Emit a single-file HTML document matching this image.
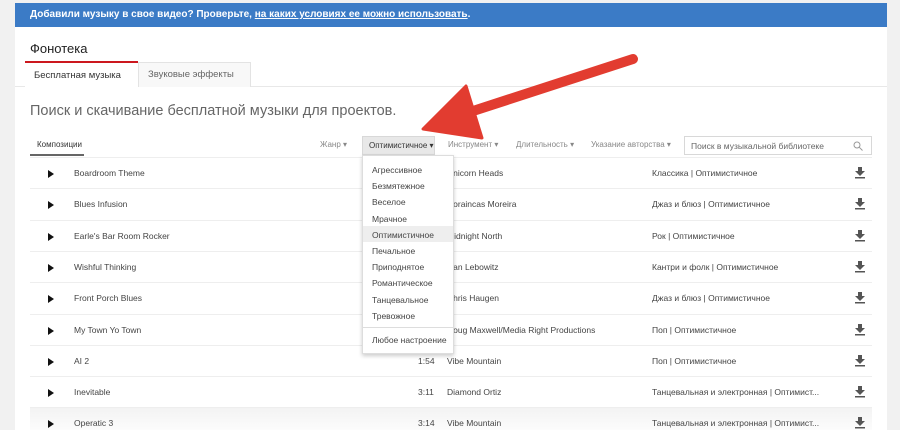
<!DOCTYPE html>
<html><head><meta charset="utf-8"><style>
*{box-sizing:border-box;margin:0;padding:0}
html,body{width:900px;height:430px;overflow:hidden}
body{background:#f1f1f1;font-family:"Liberation Sans","Noto Sans CJK SC",sans-serif;position:relative}
.panel{position:absolute;left:15px;top:3px;width:872px;height:427px;background:#fff}
.banner{position:absolute;left:15px;top:3px;width:872px;height:24px;background:#3b7bc6;color:#fff;font-size:10px;font-weight:bold;line-height:24px;padding-left:15px}
.abs{position:absolute;white-space:nowrap}
.title{left:30px;top:41px;font-size:13px;color:#222}
.tab1{left:25px;top:61px;width:113px;height:26px;border-top:2px solid #cc181e;background:#fff;font-size:9.5px;color:#333;padding:7px 0 0 9px}
.tab2{left:138px;top:62px;width:113px;height:25px;border:1px solid #e3e3e3;border-bottom:none;background:#f8f8f8;font-size:9.5px;color:#666;padding:6px 0 0 9px}
.tabline{left:15px;top:86px;width:872px;height:1px;background:#e8e8e8}
.sub{left:30px;top:103px;font-size:14.5px;color:#666}
.f{font-size:8px;color:#888;top:140px}
.sel{left:362px;top:136px;width:73px;height:19px;background:#e8e8e8;border:1px solid #d8d8d8;font-size:8px;color:#333;padding:4px 0 0 6px}
.search{left:684px;top:136px;width:188px;height:19px;border:1px solid #d8d8d8;font-size:8.5px;color:#666;padding:4px 0 0 6px}
.row{position:absolute;left:30px;width:842px;height:31px;border-top:1px solid #eee;font-size:8.5px;color:#444}
.row span{position:absolute;top:10px;white-space:nowrap}
.pl{left:18px;width:0;height:0;border-left:6px solid #111;border-top:4px solid transparent;border-bottom:4px solid transparent;top:12px!important}
.dd{left:362px;top:155px;width:92px;height:199px;background:#fff;border:1px solid #ddd;box-shadow:0 2px 4px rgba(0,0,0,.2);font-size:8.5px;color:#444}
.dd div{position:absolute;left:9px}
</style></head><body>
<div class="panel"></div>
<div class="banner">Добавили музыку в свое видео? Проверьте, <u>на каких условиях ее можно использовать</u>.</div>
<div class="abs title">Фонотека</div>
<div class="abs tabline"></div>
<div class="abs tab1">Бесплатная музыка</div>
<div class="abs tab2">Звуковые эффекты</div>
<div class="abs sub">Поиск и скачивание бесплатной музыки для проектов.</div>
<div class="abs" style="left:37px;top:140px;font-size:8px;color:#333">Композиции</div>
<div class="abs" style="left:30px;top:154px;width:54px;height:2px;background:#666"></div>
<div class="abs f" style="left:320px">Жанр ▾</div>
<div class="abs sel">Оптимистичное ▾</div>
<div class="abs f" style="left:448px">Инструмент ▾</div>
<div class="abs f" style="left:516px">Длительность ▾</div>
<div class="abs f" style="left:591px">Указание авторства ▾</div>
<div class="abs search">Поиск в музыкальной библиотеке<svg style="position:absolute;right:8px;top:4px" width="10" height="10" viewBox="0 0 10 10"><circle cx="4" cy="4" r="3" fill="none" stroke="#999" stroke-width="1"/><line x1="6.2" y1="6.2" x2="9.5" y2="9.5" stroke="#999"/></svg></div>

<div class="row" style="top:157px"><span class="pl"></span><span style="left:44px">Boardroom Theme</span><span style="left:417px">Unicorn Heads</span><span style="left:622px">Классика | Оптимистичное</span></div>
<div class="row" style="top:188px"><span class="pl"></span><span style="left:44px">Blues Infusion</span><span style="left:417px">Doraincas Moreira</span><span style="left:622px">Джаз и блюз | Оптимистичное</span></div>
<div class="row" style="top:220px"><span class="pl"></span><span style="left:44px">Earle's Bar Room Rocker</span><span style="left:417px">Midnight North</span><span style="left:622px">Рок | Оптимистичное</span></div>
<div class="row" style="top:251px"><span class="pl"></span><span style="left:44px">Wishful Thinking</span><span style="left:417px">Dan Lebowitz</span><span style="left:622px">Кантри и фолк | Оптимистичное</span></div>
<div class="row" style="top:282px"><span class="pl"></span><span style="left:44px">Front Porch Blues</span><span style="left:417px">Chris Haugen</span><span style="left:622px">Джаз и блюз | Оптимистичное</span></div>
<div class="row" style="top:314px"><span class="pl"></span><span style="left:44px">My Town Yo Town</span><span style="left:417px">Doug Maxwell/Media Right Productions</span><span style="left:622px">Поп | Оптимистичное</span></div>
<div class="row" style="top:345px"><span class="pl"></span><span style="left:44px">AI 2</span><span style="left:388px">1:54</span><span style="left:417px">Vibe Mountain</span><span style="left:622px">Поп | Оптимистичное</span></div>
<div class="row" style="top:376px"><span class="pl"></span><span style="left:44px">Inevitable</span><span style="left:388px">3:11</span><span style="left:417px">Diamond Ortiz</span><span style="left:622px">Танцевальная и электронная | Оптимист...</span></div>
<div class="row" style="top:407px;background:linear-gradient(#f3f3f3,#fff)"><span class="pl"></span><span style="left:44px">Operatic 3</span><span style="left:388px">3:14</span><span style="left:417px">Vibe Mountain</span><span style="left:622px">Танцевальная и электронная | Оптимист...</span></div>

<svg class="abs" style="left:0;top:0" width="900" height="430">
<g fill="#555">
<g transform="translate(855,167)"><rect x="3" y="0" width="4" height="4"/><polygon points="0,4 10,4 5,9"/><rect x="0" y="10" width="10" height="1.5"/></g>
<g transform="translate(855,198)"><rect x="3" y="0" width="4" height="4"/><polygon points="0,4 10,4 5,9"/><rect x="0" y="10" width="10" height="1.5"/></g>
<g transform="translate(855,230)"><rect x="3" y="0" width="4" height="4"/><polygon points="0,4 10,4 5,9"/><rect x="0" y="10" width="10" height="1.5"/></g>
<g transform="translate(855,261)"><rect x="3" y="0" width="4" height="4"/><polygon points="0,4 10,4 5,9"/><rect x="0" y="10" width="10" height="1.5"/></g>
<g transform="translate(855,292)"><rect x="3" y="0" width="4" height="4"/><polygon points="0,4 10,4 5,9"/><rect x="0" y="10" width="10" height="1.5"/></g>
<g transform="translate(855,324)"><rect x="3" y="0" width="4" height="4"/><polygon points="0,4 10,4 5,9"/><rect x="0" y="10" width="10" height="1.5"/></g>
<g transform="translate(855,355)"><rect x="3" y="0" width="4" height="4"/><polygon points="0,4 10,4 5,9"/><rect x="0" y="10" width="10" height="1.5"/></g>
<g transform="translate(855,386)"><rect x="3" y="0" width="4" height="4"/><polygon points="0,4 10,4 5,9"/><rect x="0" y="10" width="10" height="1.5"/></g>
<g transform="translate(855,417)"><rect x="3" y="0" width="4" height="4"/><polygon points="0,4 10,4 5,9"/><rect x="0" y="10" width="10" height="1.5"/></g>
</g>
</svg>

<div class="abs dd">
<div style="left:0;top:70px;width:90px;height:16px;background:#eee"></div>
<div style="top:9px">Агрессивное</div>
<div style="top:25px">Безмятежное</div>
<div style="top:41px">Веселое</div>
<div style="top:58px">Мрачное</div>
<div style="top:74px">Оптимистичное</div>
<div style="top:90px">Печальное</div>
<div style="top:106px">Приподнятое</div>
<div style="top:122px">Романтическое</div>
<div style="top:139px">Танцевальное</div>
<div style="top:155px">Тревожное</div>
<div style="left:0;top:171px;width:90px;height:1px;background:#ddd"></div>
<div style="top:179px">Любое настроение</div>
</div>

<svg class="abs" style="left:0;top:0" width="900" height="430">
<line x1="633" y1="59" x2="470" y2="112" stroke="#e23c30" stroke-width="10" stroke-linecap="round"/>
<polygon points="423,129 466,86 482,138" fill="#e23c30" stroke="#e23c30" stroke-width="3" stroke-linejoin="round"/>
</svg>
</body></html>
